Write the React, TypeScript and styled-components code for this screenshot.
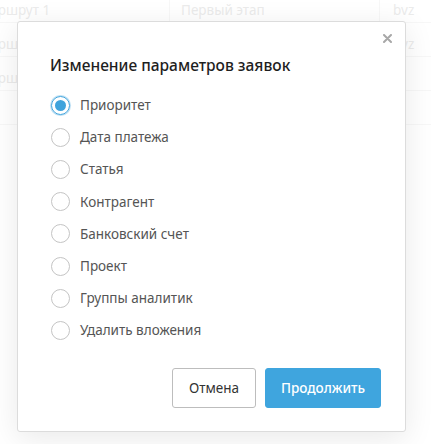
import React, { useState } from "react";
import styled, { createGlobalStyle } from "styled-components";

const GlobalStyle = createGlobalStyle`
  html, body { margin: 0; padding: 0; background: #fff; }
  body { font-family: "Noto Sans", "Open Sans", Arial, sans-serif; }
  * { box-sizing: border-box; }
`;

const Screen = styled.div`
  position: relative;
  width: 431px;
  height: 444px;
  overflow: hidden;
  background: #fff;
`;

const Table = styled.div`
  display: flex;
  flex-direction: column;
  margin: -11px 0 0 -35px;
`;

const Row = styled.div`
  display: flex;
  height: 34px;
  border-bottom: 1px solid #eeeeee;
`;

const Cell = styled.div<{ $w: number; $pad: number }>`
  width: ${(p) => p.$w}px;
  flex: none;
  padding: 8px 0 0 ${(p) => p.$pad}px;
  display: flex;
  align-items: center;
  font-size: 13.5px;
  color: #d2d2d2;
  border-right: 1px solid #eeeeee;
  white-space: nowrap;
`;

const Overlay = styled.div`
  position: absolute;
  inset: 0;
  background: rgba(255, 255, 255, 0.55);
  padding: 21px 0 0 17px;
`;

const Modal = styled.div`
  position: relative;
  width: 389px;
  height: 411px;
  background: #fff;
  border: 1px solid #dcdcdc;
  border-radius: 3px;
  box-shadow: 0 6px 30px rgba(0, 0, 0, 0.09);
  padding: 33px 24px 23px 32px;
  display: flex;
  flex-direction: column;
`;

const Close = styled.button`
  position: absolute;
  top: 8px;
  right: 10px;
  width: 16px;
  height: 16px;
  border: none;
  background: none;
  padding: 0;
  display: flex;
  align-items: center;
  justify-content: center;
  cursor: pointer;
`;

const Title = styled.h2`
  margin: 0 0 14px 0;
  font-size: 15.5px;
  font-weight: 500;
  color: #1e1e1e;
  line-height: 20px;
`;

const Options = styled.div`
  display: flex;
  flex-direction: column;
  padding-left: 1px;
`;

const Option = styled.label`
  display: flex;
  align-items: center;
  height: 32.2px;
  gap: 10px;
  font-size: 13.5px;
  color: #555;
  cursor: pointer;
`;

const Radio = styled.span<{ $checked: boolean }>`
  width: 19px;
  height: 19px;
  flex: none;
  border-radius: 50%;
  border: 1px solid ${(p) => (p.$checked ? "#3fa3dc" : "#c4c4c4")};
  box-shadow: ${(p) => (p.$checked ? "0 0 0 1px rgba(63,163,220,0.35)" : "none")};
  display: flex;
  align-items: center;
  justify-content: center;
  &::after {
    content: "";
    width: 11px;
    height: 11px;
    border-radius: 50%;
    background: #3fa3dc;
    display: ${(p) => (p.$checked ? "block" : "none")};
  }
`;

const Footer = styled.div`
  margin-top: auto;
  display: flex;
  justify-content: flex-end;
  gap: 9px;
`;

const Button = styled.button<{ $primary?: boolean }>`
  height: 40px;
  padding: 0;
  width: ${(p) => (p.$primary ? 116 : 84)}px;
  border-radius: 3px;
  font-family: inherit;
  font-size: 13.5px;
  font-weight: ${(p) => (p.$primary ? 500 : 400)};
  border: 1px solid ${(p) => (p.$primary ? "#3fa5de" : "#bdbdbd")};
  background: ${(p) => (p.$primary ? "#3fa5de" : "#fff")};
  color: ${(p) => (p.$primary ? "#fff" : "#333")};
  cursor: pointer;
`;

const rows = [
  ["Маршрут 1", "Первый этап", "bvz"],
  ["Маршрут 2", "", "bvz"],
  ["Маршрут 3", "", ""],
  ["", "", ""],
];

const options = [
  "Приоритет",
  "Дата платежа",
  "Статья",
  "Контрагент",
  "Банковский счет",
  "Проект",
  "Группы аналитик",
  "Удалить вложения",
];

export default function App() {
  const [selected, setSelected] = useState(0);
  return (
    <>
      <GlobalStyle />
      <Screen>
        <Table>
          {rows.map((r, i) => (
            <Row key={i}>
              <Cell $w={205} $pad={13}>{r[0]}</Cell>
              <Cell $w={210} $pad={11}>{r[1]}</Cell>
              <Cell $w={120} $pad={13}>{r[2]}</Cell>
            </Row>
          ))}
        </Table>
        <Overlay>
          <Modal>
            <Close aria-label="Закрыть">
              <svg width="9" height="9" viewBox="0 0 9 9">
                <path d="M1 1L8 8M8 1L1 8" stroke="#a8a8a8" strokeWidth="2" strokeLinecap="round" />
              </svg>
            </Close>
            <Title>Изменение параметров заявок</Title>
            <Options>
              {options.map((o, i) => (
                <Option key={o} onClick={() => setSelected(i)}>
                  <Radio $checked={selected === i} />
                  {o}
                </Option>
              ))}
            </Options>
            <Footer>
              <Button>Отмена</Button>
              <Button $primary>Продолжить</Button>
            </Footer>
          </Modal>
        </Overlay>
      </Screen>
    </>
  );
}
